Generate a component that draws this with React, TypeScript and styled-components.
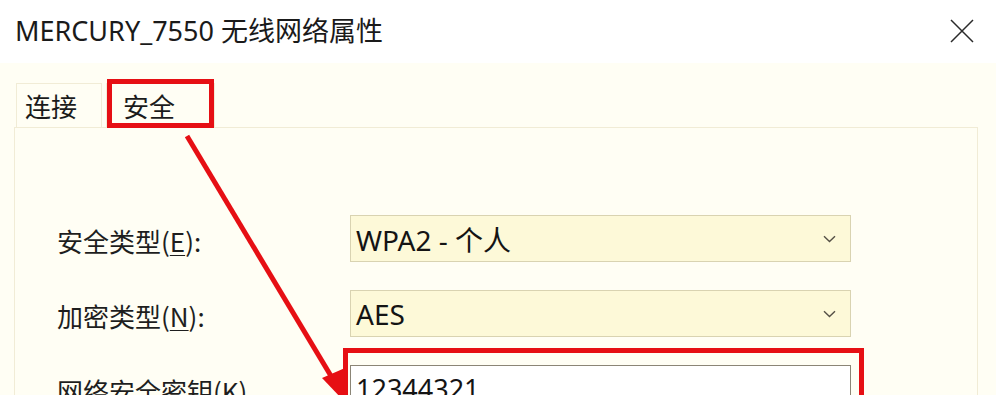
import styled, { createGlobalStyle } from 'styled-components'

const GlobalStyle = createGlobalStyle`
  html, body {
    margin: 0;
    padding: 0;
    background: #fffef4;
  }
  body {
    font-family: "Noto Sans CJK SC", "Noto Sans", sans-serif;
    color: #1b1b1b;
  }
`

const Window = styled.div`
  position: relative;
  width: 996px;
  height: 395px;
  overflow: hidden;
  background: #fffef4;
`

const TitleBar = styled.div`
  height: 63px;
  background: #ffffff;
  display: flex;
  align-items: center;
  justify-content: space-between;
  padding: 0 21px 0 15px;
  box-sizing: border-box;
`

const Title = styled.div`
  font-family: "Noto Sans", "Noto Sans CJK SC", sans-serif;
  font-size: 27px;
  line-height: 1;
  margin-top: -3px;
  color: #1a1a1a;
`

const CloseButton = styled.button`
  width: 26px;
  height: 26px;
  padding: 0;
  border: none;
  background: transparent;
  display: flex;
  align-items: center;
  justify-content: center;
  margin-top: -2px;
`

const Content = styled.div`
  padding: 15px 18px 0 14px;
`

const Tabs = styled.div`
  display: flex;
  align-items: flex-end;
  height: 49px;
  padding-left: 2px;
`

const Tab = styled.div<{ $active?: boolean; $marked?: boolean }>`
  position: relative;
  box-sizing: border-box;
  height: 44px;
  padding: 0 ${p => (p.$active ? 39 : 24)}px 0 ${p => (p.$active ? 16 : 8)}px;
  display: flex;
  align-items: center;
  font-size: 26px;
  background: #fffef4;
  border: 1px solid #f1ecd6;
  border-bottom: none;
  margin-right: ${p => (p.$active ? 0 : 4)}px;

  ${p =>
    p.$marked &&
    `
    &::after {
      content: '';
      position: absolute;
      left: 0;
      right: 0;
      top: -5px;
      bottom: -1px;
      border: 5px solid #e60f14;
    }
  `}
`

const Panel = styled.div`
  border: 1px solid #f1ecd6;
  border-bottom: none;
  height: 300px;
  padding: 87px 0 0 42px;
  box-sizing: border-box;
`

const Form = styled.div`
  display: grid;
  grid-template-columns: 293px 501px;
  row-gap: 28px;
  align-items: center;
`

const Label = styled.div`
  font-size: 26px;
  line-height: 1;
  color: #1e1e1e;
  margin-top: 4px;

  u {
    text-decoration-thickness: 1px;
    text-underline-offset: 3px;
  }
`

const Select = styled.div`
  box-sizing: border-box;
  height: 47px;
  background: #fdf9d8;
  border: 1px solid #d9d3b1;
  display: flex;
  align-items: center;
  justify-content: space-between;
  padding: 0 14px 0 5px;
  font-family: "Noto Sans", "Noto Sans CJK SC", sans-serif;
  font-size: 28px;
  color: #141414;
`

const KeyField = styled.div`
  position: relative;

  &::after {
    content: '';
    position: absolute;
    left: -7px;
    right: -13px;
    top: -17px;
    bottom: -20px;
    border: 5px solid #e60f14;
  }
`

const TextInput = styled.div`
  box-sizing: border-box;
  height: 47px;
  background: #ffffff;
  border: 1px solid #8b8576;
  display: flex;
  align-items: center;
  padding: 0 5px;
  font-family: "Noto Sans", "Noto Sans CJK SC", sans-serif;
  font-size: 27px;
  color: #141414;
`

const Arrow = styled.svg`
  position: absolute;
  left: 0;
  top: 0;
  pointer-events: none;
`

const Chevron = () => (
  <svg width="13" height="8" viewBox="0 0 13 8">
    <path d="M1 1.2 L6.5 6.5 L12 1.2" fill="none" stroke="#555046" strokeWidth="1.4" />
  </svg>
)

const App = () => {
  return (
    <Window>
      <GlobalStyle />
      <TitleBar>
        <Title>MERCURY_7550 无线网络属性</Title>
        <CloseButton aria-label="关闭">
          <svg width="24" height="24" viewBox="0 0 24 24">
            <path d="M1 1 L23 23 M23 1 L1 23" stroke="#2a2a2a" strokeWidth="1.5" />
          </svg>
        </CloseButton>
      </TitleBar>

      <Content>
        <Tabs>
          <Tab>连接</Tab>
          <Tab $active $marked>安全</Tab>
        </Tabs>
        <Panel>
          <Form>
            <Label>
              安全类型(<u>E</u>):
            </Label>
            <Select>
              <span>WPA2 - 个人</span>
              <Chevron />
            </Select>

            <Label>
              加密类型(<u>N</u>):
            </Label>
            <Select>
              <span>AES</span>
              <Chevron />
            </Select>

            <Label>
              网络安全密钥(<u>K</u>)
            </Label>
            <KeyField>
              <TextInput>12344321</TextInput>
            </KeyField>
          </Form>
        </Panel>
      </Content>

      <Arrow width="996" height="395" viewBox="0 0 996 395">
        <line x1="187" y1="136" x2="334" y2="381" stroke="#e60f14" strokeWidth="5" />
        <polygon points="343,400 322,378 345,368" fill="#e60f14" />
      </Arrow>
    </Window>
  )
}

export default App
